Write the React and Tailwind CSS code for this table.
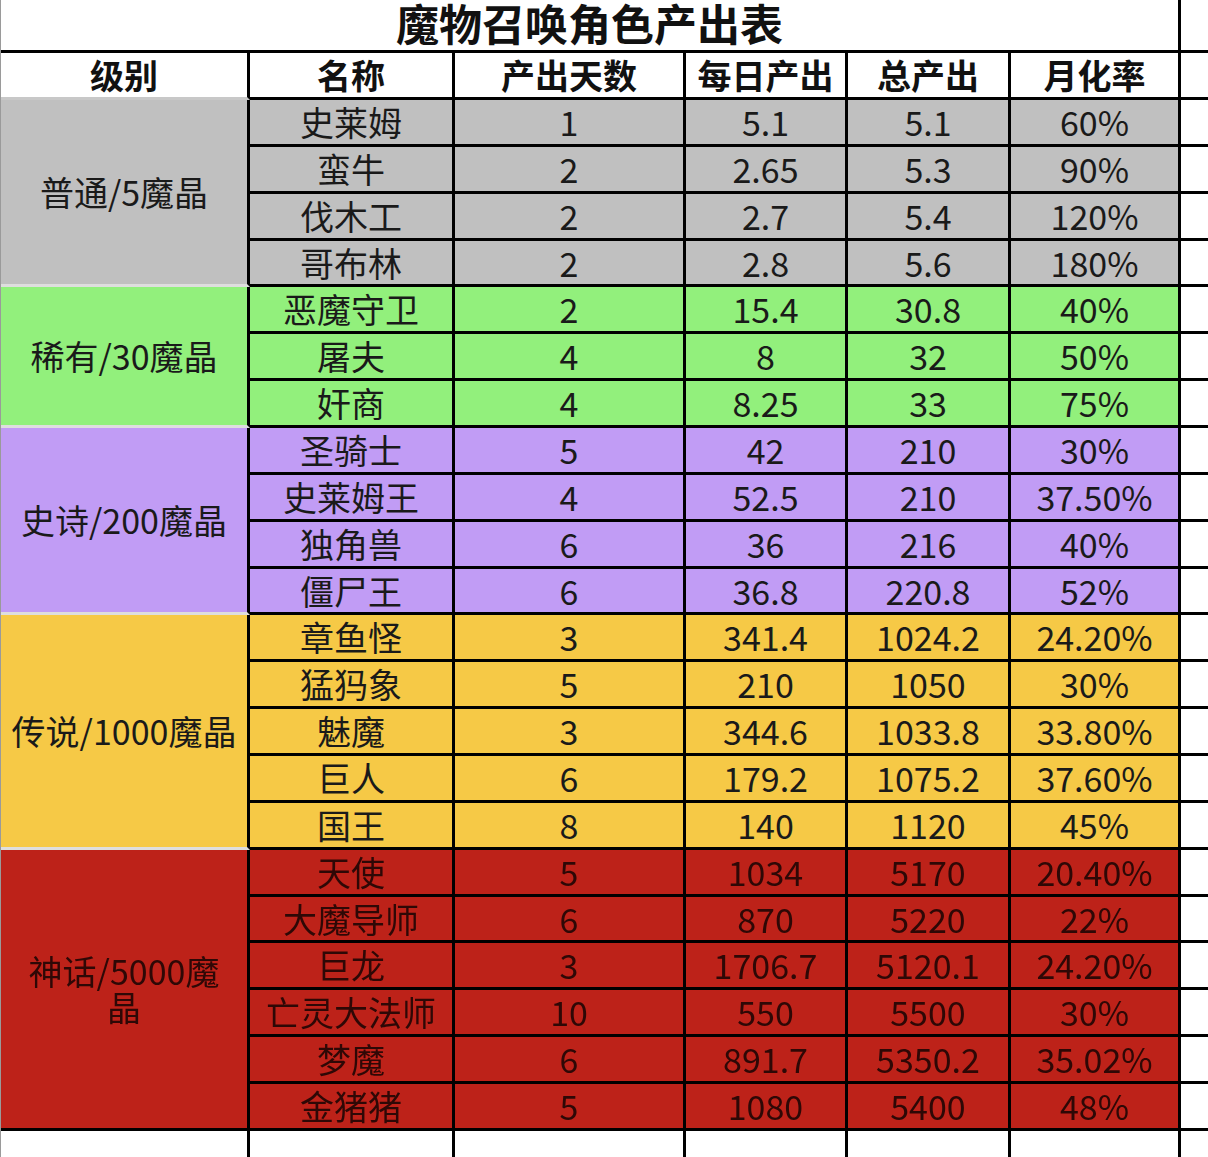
import React from 'react';

const FONT = { fontFamily: '"Noto Sans CJK SC", "Noto Sans", sans-serif' };

const groups = [
  {
    label: ['普通/5魔晶'],
    bg: 'bg-[#c0c0c0]',
    text: 'text-[#1a1a1a]',
    last: false,
    rows: [
      ['史莱姆', '1', '5.1', '5.1', '60%'],
      ['蛮牛', '2', '2.65', '5.3', '90%'],
      ['伐木工', '2', '2.7', '5.4', '120%'],
      ['哥布林', '2', '2.8', '5.6', '180%'],
    ],
  },
  {
    label: ['稀有/30魔晶'],
    bg: 'bg-[#92f07c]',
    text: 'text-[#1a1a1a]',
    last: false,
    rows: [
      ['恶魔守卫', '2', '15.4', '30.8', '40%'],
      ['屠夫', '4', '8', '32', '50%'],
      ['奸商', '4', '8.25', '33', '75%'],
    ],
  },
  {
    label: ['史诗/200魔晶'],
    bg: 'bg-[#c19cf5]',
    text: 'text-[#1a1a1a]',
    last: false,
    rows: [
      ['圣骑士', '5', '42', '210', '30%'],
      ['史莱姆王', '4', '52.5', '210', '37.50%'],
      ['独角兽', '6', '36', '216', '40%'],
      ['僵尸王', '6', '36.8', '220.8', '52%'],
    ],
  },
  {
    label: ['传说/1000魔晶'],
    bg: 'bg-[#f6c946]',
    text: 'text-[#1a1a1a]',
    last: false,
    rows: [
      ['章鱼怪', '3', '341.4', '1024.2', '24.20%'],
      ['猛犸象', '5', '210', '1050', '30%'],
      ['魅魔', '3', '344.6', '1033.8', '33.80%'],
      ['巨人', '6', '179.2', '1075.2', '37.60%'],
      ['国王', '8', '140', '1120', '45%'],
    ],
  },
  {
    label: ['神话/5000魔', '晶'],
    bg: 'bg-[#bd2219]',
    text: 'text-[#2e0806] blur-[0.4px]',
    last: true,
    rows: [
      ['天使', '5', '1034', '5170', '20.40%'],
      ['大魔导师', '6', '870', '5220', '22%'],
      ['巨龙', '3', '1706.7', '5120.1', '24.20%'],
      ['亡灵大法师', '10', '550', '5500', '30%'],
      ['梦魔', '6', '891.7', '5350.2', '35.02%'],
      ['金猪猪', '5', '1080', '5400', '48%'],
    ],
  },
];

const widths = [
  'w-[205px]',
  'w-[231px]',
  'w-[162px]',
  'w-[163px]',
  'w-[170px]',
];

const headers = ['名称', '产出天数', '每日产出', '总产出', '月化率'];
const shortRows = new Set([4, 11, 18]);

function Cell({ w, bg, text, children }) {
  return (
    <div
      className={`${w} ${bg} shrink-0 h-full border-r-[3px] border-black flex items-center justify-center`}
    >
      <span className={`${text} text-[34px] leading-none whitespace-nowrap`}>{children}</span>
    </div>
  );
}

export default function App() {
  let idx = 0;
  return (
    <div
      className="w-[1208px] h-[1157px] overflow-hidden bg-white border-l border-[#9a9a9a] flex flex-col"
      style={FONT}
    >
      {/* Title */}
      <div className="h-[53px] shrink-0 flex border-b-[3px] border-black">
        <div className="w-[1180px] shrink-0 border-r-[3px] border-black flex justify-center items-start">
          <span className="text-[43px] leading-[44px] font-bold text-[#111]">魔物召唤角色产出表</span>
        </div>
        <div className="flex-1" />
      </div>

      {/* Header */}
      <div className="h-[47px] shrink-0 flex">
        <div className="w-[249px] shrink-0 h-full border-r-[3px] border-black border-b-[3px] border-b-[#c8c8c8] flex items-center justify-center">
          <span className="text-[34px] leading-none font-bold text-[#111]">级别</span>
        </div>
        {headers.map((h, i) => (
          <div
            key={h}
            className={`${widths[i]} shrink-0 h-full border-r-[3px] border-b-[3px] border-black flex items-center justify-center`}
          >
            <span className="text-[34px] leading-none font-bold text-[#111]">{h}</span>
          </div>
        ))}
        <div className="flex-1 h-full border-b-[3px] border-black" />
      </div>

      {/* Groups */}
      {groups.map((g) => (
        <div key={g.label[0]} className="flex shrink-0">
          <div
            className={`w-[249px] shrink-0 ${g.bg} border-r-[3px] border-black border-b-[3px] ${
              g.last ? 'border-b-black' : 'border-b-[#dedede]'
            } flex flex-col items-center justify-center`}
          >
            {g.label.map((l) => (
              <span key={l} className={`${g.text} text-[34px] leading-[36px] whitespace-nowrap`}>
                {l}
              </span>
            ))}
          </div>
          <div className="flex-1 flex flex-col">
            {g.rows.map((r) => {
              idx += 1;
              const h = shortRows.has(idx) ? 'h-[46px]' : 'h-[47px]';
              return (
                <div key={r[0]} className={`${h} flex border-b-[3px] border-black`}>
                  {r.map((v, i) => (
                    <Cell key={i} w={widths[i]} bg={g.bg} text={g.text}>
                      {v}
                    </Cell>
                  ))}
                  <div className="flex-1 bg-white" />
                </div>
              );
            })}
          </div>
        </div>
      ))}

      {/* Bottom empty row */}
      <div className="flex-1 flex">
        <div className="w-[249px] shrink-0 h-full border-r-[3px] border-black" />
        {widths.map((w) => (
          <div key={w} className={`${w} shrink-0 h-full border-r-[3px] border-black`} />
        ))}
        <div className="flex-1" />
      </div>
    </div>
  );
}
